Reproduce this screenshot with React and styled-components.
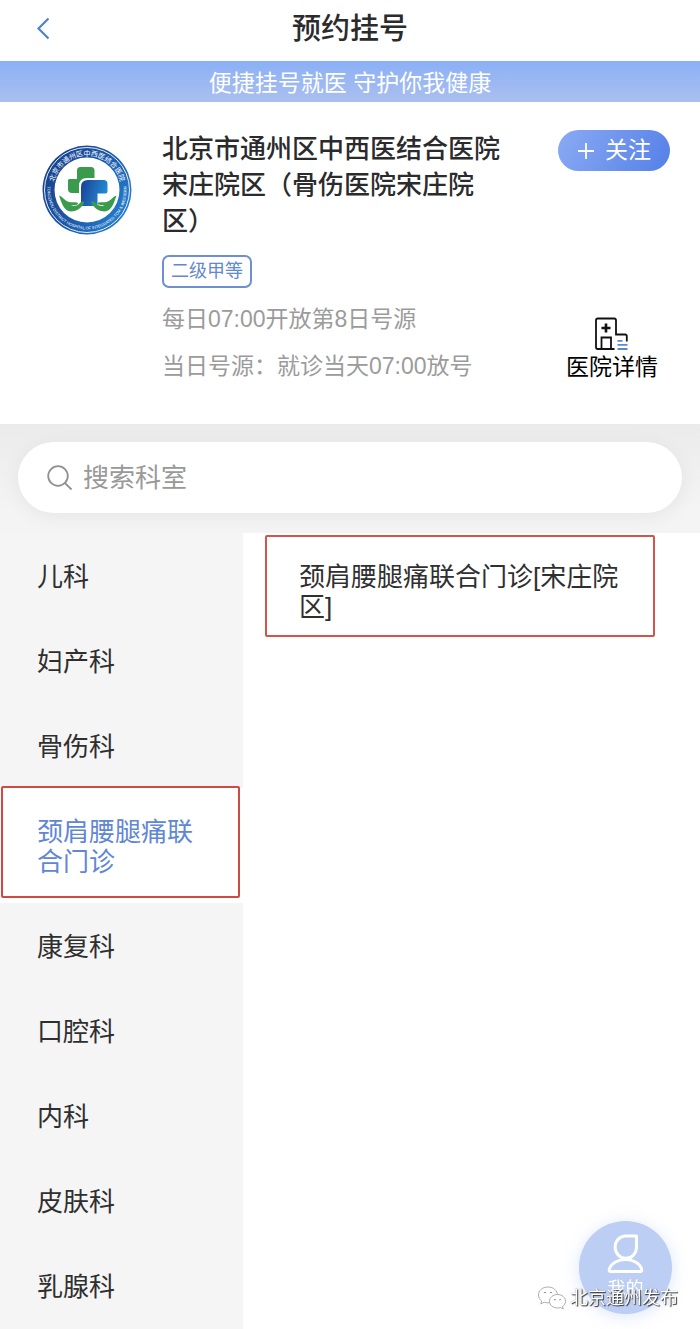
import React, { useState } from "react";
import styled, { createGlobalStyle, css } from "styled-components";

const GlobalStyle = createGlobalStyle`
  *, *::before, *::after { box-sizing: border-box; }
  body {
    margin: 0;
    background: #fff;
    color: #2b2b2d;
    font-family: "Liberation Sans", "Noto Sans CJK SC", sans-serif;
  }
  button, input { font: inherit; color: inherit; }
  button { border: 0; padding: 0; background: none; cursor: pointer; text-align: inherit; }
  h1, h2, p, ul { margin: 0; padding: 0; }
`;

const Page = styled.div`
  min-height: 100vh;
  display: flex;
  flex-direction: column;
`;

const TopBar = styled.header`
  display: grid;
  grid-template-columns: 86px 1fr 86px;
  align-items: center;
  height: 61px;
  padding-bottom: 3px;
`;

const BackButton = styled.button`
  display: flex;
  justify-content: center;
`;

const Title = styled.h1`
  font-size: 29px;
  line-height: 42px;
  font-weight: 500;
  text-align: center;
`;

const Slogan = styled.p`
  height: 41px;
  font-size: 23px;
  line-height: 44px;
  text-align: center;
  color: #fff;
  background: linear-gradient(#8bb0f6, #aabfef);
`;

const Hospital = styled.section`
  display: grid;
  grid-template-columns: 90px minmax(0, 1fr) auto;
  column-gap: 30px;
  padding: 28px 30px 34px 42px;
`;

const LogoBox = styled.div`
  padding-top: 15px;
`;

const Info = styled.div`
  display: flex;
  flex-direction: column;
  align-items: flex-start;
  padding-top: 1px;
`;

const Name = styled.h2`
  max-width: 350px;
  font-size: 26px;
  line-height: 36px;
  font-weight: 500;
`;

const Grade = styled.span`
  margin: 16px 0 8px;
  padding: 0 7px;
  border: 2px solid #6c90d0;
  border-radius: 7px;
  font-size: 18px;
  line-height: 29px;
  color: #6288cd;
`;

const Meta = styled.p`
  font-size: 23px;
  line-height: 47px;
  color: #9b9b9b;
  white-space: nowrap;
`;

const Actions = styled.div`
  display: flex;
  flex-direction: column;
  align-items: flex-end;
  justify-content: space-between;
`;

const FollowButton = styled.button`
  display: flex;
  align-items: center;
  justify-content: center;
  gap: 10px;
  width: 112px;
  height: 41px;
  border-radius: 21px;
  font-size: 23px;
  line-height: 43px;
  color: #fff;
  background: linear-gradient(115deg, #8aaaf3, #5580e8);
`;

const DetailLink = styled.a`
  display: flex;
  flex-direction: column;
  align-items: center;
  margin: 0 12px 7px 0;
  font-size: 23px;
  line-height: 32px;
  color: #000;
  text-decoration: none;
`;

const SearchArea = styled.section`
  padding: 18px 18px 20px;
  background: linear-gradient(#ebebeb, #f4f4f4 80%);
`;

const SearchBox = styled.label`
  display: flex;
  align-items: center;
  gap: 10px;
  height: 71px;
  padding: 0 29px;
  border-radius: 36px;
  background: #fff;
  box-shadow: 0 4px 20px rgba(0, 0, 0, 0.06);
`;

const SearchInput = styled.input`
  flex: 1;
  min-width: 0;
  padding: 0;
  border: 0;
  outline: 0;
  background: none;
  font-size: 26px;
  line-height: 40px;
  &::placeholder { color: #999; opacity: 1; }
`;

const Body = styled.main`
  flex: 1;
  display: flex;
  background: #fff;
`;

const DeptList = styled.ul`
  flex: 0 0 243px;
  list-style: none;
  background: #f5f5f5;
`;

const Marked = css`
  &::after {
    content: "";
    position: absolute;
    inset: -2px 3px 5px 1px;
    border: 2px solid #cf4a41;
    border-radius: 2px;
  }
`;

const DeptButton = styled.button`
  position: relative;
  display: block;
  width: 100%;
  padding: 29px 44px 26px 37px;
  font-size: 26px;
  line-height: 30px;
  color: ${(p) => (p.$active ? "#5f87d5" : "#2f2f2f")};
  background: ${(p) => (p.$active ? "#fff" : "transparent")};
  ${(p) => p.$active && Marked}
`;

const Clinics = styled.div`
  flex: 1;
  min-width: 0;
  padding: 2px 45px 0 22px;
`;

const ClinicButton = styled.button`
  width: 100%;
  padding: 25px 30px 13px 32px;
  border: 2px solid #d2554b;
  border-radius: 2px;
  font-size: 26px;
  line-height: 30px;
  color: #2f2f2f;
`;

const MineButton = styled.button`
  position: fixed;
  right: 28px;
  bottom: 15px;
  display: flex;
  flex-direction: column;
  align-items: center;
  width: 93px;
  height: 93px;
  padding-top: 12px;
  border-radius: 50%;
  font-size: 18px;
  line-height: 28px;
  color: #fff;
  background: #bccef3;
  box-shadow: 0 2px 16px rgba(150, 180, 240, 0.35);
`;

const Watermark = styled.div`
  position: fixed;
  right: 22px;
  bottom: 17px;
  display: flex;
  align-items: center;
  gap: 3px;
  font-size: 18px;
  line-height: 28px;
  color: #fff;
  text-shadow: 1px 1px 1px #333, 0 0 1px #777;
  pointer-events: none;
`;

const BackIcon = () => (
  <svg width="16" height="24" viewBox="0 0 16 24" fill="none" stroke="#4a86d0" strokeWidth="2.2" aria-hidden="true">
    <path d="M13.5 1.5 3.500 11.500 13.5 21.500" />
  </svg>
);

const PlusIcon = () => (
  <svg width="18" height="18" viewBox="0 0 18 18" stroke="#fff" strokeWidth="1.8" aria-hidden="true">
    <path d="M9 1v16M1 9h16" />
  </svg>
);

const SearchIcon = () => (
  <svg width="26" height="26" viewBox="0 0 26 26" fill="none" stroke="#909090" strokeWidth="1.8" aria-hidden="true">
    <circle cx="11" cy="11" r="9.8" />
    <path d="M17.800 17.800 24.500 24.500" />
  </svg>
);

const HospitalIcon = () => (
  <svg width="34" height="34" viewBox="0 0 34 34" fill="none" stroke="#111" strokeWidth="1.8" aria-hidden="true">
    <path d="M19.500 32H2.700A1.700 1.700 0 0 1 1 30.300V3.200a1.700 1.700 0 0 1 1.700-1.700h16.600A1.700 1.700 0 0 1 21 3.200v14.300h9.300a1.500 1.500 0 0 1 1.500 1.500v5.500" />
    <path d="M6.500 32V20.500H16V32" />
    <path d="M11 6.500v9M6.500 11h9" strokeWidth="2.6" />
    <path d="M22.500 23.800h5M22.500 27.800h10M22.500 32h10" stroke="#5b87d6" strokeWidth="1.8" />
  </svg>
);

const PersonIcon = () => (
  <svg width="40" height="42" viewBox="0 0 40 42" fill="none" stroke="#fff" strokeWidth="3" strokeLinejoin="round" aria-hidden="true">
    <path d="M30.500 3H19A10.700 11.200 0 1 0 30.500 14Z" />
    <path d="M4.500 38.500h29.500q2.500 0 1.500-3C33.500 30 27 26.500 19.500 26.500S5.500 30 3.500 35.500q-1 3 1 3Z" />
  </svg>
);

const WechatIcon = () => (
  <svg width="30" height="26" viewBox="0 0 30 26" fill="#fff" stroke="#999" strokeWidth="0.8" aria-hidden="true">
    <path d="M11 2C5.500 2 1.500 5.500 1.500 10c0 2.500 1.200 4.500 3.200 6l-.9 3 3.400-1.800c1.200.4 2.500.6 3.800.6 5.500 0 9.500-3.500 9.500-7.800S16.500 2 11 2Z" />
    <path d="M20.500 9.500c-4.500 0-8 3-8 6.800s3.500 6.700 8 6.700c1 0 2-.2 3-.5l2.800 1.600-.8-2.600c1.900-1.300 3-3.100 3-5.200 0-3.800-3.500-6.800-8-6.800Z" />
    <path d="M6.800 8q1.200-1.600 2.400 0M12.800 8q1.200-1.600 2.400 0M17 15q1-1.400 2 0M22.200 15q1-1.400 2 0" fill="none" stroke="#777" />
  </svg>
);

const HospitalLogo = () => (
  <svg width="90" height="90" viewBox="0 0 90 90" role="img" aria-label="医院标志">
    <defs>
      <linearGradient id="ring" x1="0" y1="0.2" x2="1" y2="0.8">
        <stop offset="0" stopColor="#173f8c" />
        <stop offset="0.5" stopColor="#1c58a8" />
        <stop offset="1" stopColor="#2683d3" />
      </linearGradient>
      <linearGradient id="cross" x1="0" y1="0" x2="1" y2="0.3">
        <stop offset="0" stopColor="#1b3f93" />
        <stop offset="1" stopColor="#2389d2" />
      </linearGradient>
      <path id="arcTop" d="M13.500 57.500A34 34 0 1 1 76.500 57.500" />
      <path id="arcBottom" d="M6 38A39.600 39.600 0 1 0 84 38" />
    </defs>
    <circle cx="45" cy="45" r="44.500" fill="url(#ring)" />
    <circle cx="45" cy="45" r="42.500" fill="none" stroke="#fff" strokeWidth="0.900" />
    <circle cx="45" cy="45" r="32.500" fill="#fff" />
    <text fontSize="7" fill="#fff">
      <textPath href="#arcTop" startOffset="50%" textAnchor="middle">北京市通州区中西医结合医院</textPath>
    </text>
    <text fontSize="4" fill="#fff">
      <textPath href="#arcBottom" startOffset="50%" textAnchor="middle">TONGZHOU DISTRICT HOSPITAL OF INTEGRATED TCM &amp; WESTERN</textPath>
    </text>
    <path fill="#3a9b4d" d="M38.500 22H49q3.500 0 3.500 3.500V36H26V35.500q0-1.500 1.500-1.500H35v-8.500q0-3.500 3.500-3.500Z" />
    <path fill="#3a9b4d" d="M26 35h14v13H30q-4 0-4-4Z" />
    <path fill="#fff" d="M45 33h18.500q4 0 4 4v13H57v12.500H37V41q0-8 8-8Z" />
    <path fill="url(#cross)" d="M46 35h15.500q4 0 4 4v7.500q0 2-2 2H55.500V58.500q0 2.500-2.500 2.500H39V42q0-7 7-7Z" />
    <g fill="#3a9b4d">
      <path d="M17 50.500c3 1 7 6 10 6.500 4 .5 9-.5 9 1.500s-5 1.500-7 2c3 1 7 0 9-2.500 2-2 5-2 4 .5-3 5-8 8-13 8-7 0-9.500-9-12-16Z" />
      <path d="M74.500 50.500c-3 1-7 6-10 6.500-4 .5-9-.5-9 1.500s5 1.500 7 2c-3 1-7 0-9-2.500-2-2-5-2-4 .5 3 5 8 8 13 8 7 0 9.500-9 12-16Z" />
    </g>
  </svg>
);

const departments = [
  "儿科",
  "妇产科",
  "骨伤科",
  "颈肩腰腿痛联合门诊",
  "康复科",
  "口腔科",
  "内科",
  "皮肤科",
  "乳腺科",
];

export default function App() {
  const [active, setActive] = useState("颈肩腰腿痛联合门诊");
  return (
    <Page>
      <GlobalStyle />
      <TopBar>
        <BackButton type="button" aria-label="返回"><BackIcon /></BackButton>
        <Title>预约挂号</Title>
      </TopBar>
      <Slogan>便捷挂号就医 守护你我健康</Slogan>
      <Hospital>
        <LogoBox><HospitalLogo /></LogoBox>
        <Info>
          <Name>北京市通州区中西医结合医院宋庄院区（骨伤医院宋庄院区）</Name>
          <Grade>二级甲等</Grade>
          <Meta>每日07:00开放第8日号源</Meta>
          <Meta>当日号源：就诊当天07:00放号</Meta>
        </Info>
        <Actions>
          <FollowButton type="button"><PlusIcon />关注</FollowButton>
          <DetailLink href="#detail"><HospitalIcon />医院详情</DetailLink>
        </Actions>
      </Hospital>
      <SearchArea>
        <SearchBox>
          <SearchIcon />
          <SearchInput type="search" placeholder="搜索科室" aria-label="搜索科室" />
        </SearchBox>
      </SearchArea>
      <Body>
        <DeptList>
          {departments.map((name) => (
            <li key={name}>
              <DeptButton type="button" $active={name === active} onClick={() => setActive(name)}>
                {name}
              </DeptButton>
            </li>
          ))}
        </DeptList>
        <Clinics>
          <ClinicButton type="button">颈肩腰腿痛联合门诊[宋庄院区]</ClinicButton>
        </Clinics>
      </Body>
      <MineButton type="button"><PersonIcon />我的</MineButton>
      <Watermark><WechatIcon />北京通州发布</Watermark>
    </Page>
  );
}
